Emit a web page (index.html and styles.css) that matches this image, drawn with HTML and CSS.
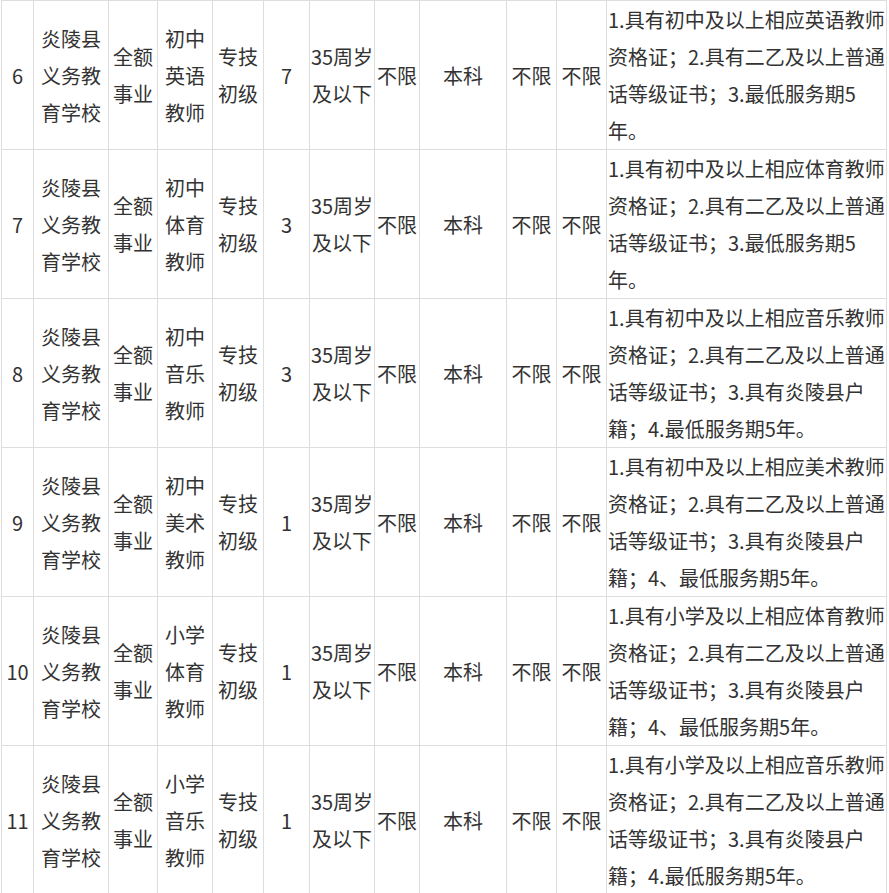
FILE: index.html
```html
<!DOCTYPE html>
<html lang="zh-CN">
<head>
<meta charset="utf-8">
<title>岗位表</title>
<link rel="stylesheet" href="styles.css">
</head>
<body>
<table class="jobs">
  <colgroup>
    <col class="c-no">
    <col class="c-unit">
    <col class="c-type">
    <col class="c-post">
    <col class="c-level">
    <col class="c-num">
    <col class="c-age">
    <col class="c-a">
    <col class="c-edu">
    <col class="c-b">
    <col class="c-c">
    <col class="c-req">
  </colgroup>
  <tbody>
    <tr>
      <td>6</td><td>炎陵县义务教育学校</td><td>全额事业</td><td>初中英语教师</td><td>专技初级</td><td>7</td><td>35周岁及以下</td><td>不限</td><td>本科</td><td>不限</td><td>不限</td>
      <td class="req">1.具有初中及以上相应英语教师资格证；2.具有二乙及以上普通话等级证书；3.最低服务期5年。</td>
    </tr>
    <tr>
      <td>7</td><td>炎陵县义务教育学校</td><td>全额事业</td><td>初中体育教师</td><td>专技初级</td><td>3</td><td>35周岁及以下</td><td>不限</td><td>本科</td><td>不限</td><td>不限</td>
      <td class="req">1.具有初中及以上相应体育教师资格证；2.具有二乙及以上普通话等级证书；3.最低服务期5年。</td>
    </tr>
    <tr>
      <td>8</td><td>炎陵县义务教育学校</td><td>全额事业</td><td>初中音乐教师</td><td>专技初级</td><td>3</td><td>35周岁及以下</td><td>不限</td><td>本科</td><td>不限</td><td>不限</td>
      <td class="req">1.具有初中及以上相应音乐教师资格证；2.具有二乙及以上普通话等级证书；3.具有炎陵县户籍；4.最低服务期5年。</td>
    </tr>
    <tr>
      <td>9</td><td>炎陵县义务教育学校</td><td>全额事业</td><td>初中美术教师</td><td>专技初级</td><td>1</td><td>35周岁及以下</td><td>不限</td><td>本科</td><td>不限</td><td>不限</td>
      <td class="req">1.具有初中及以上相应美术教师资格证；2.具有二乙及以上普通话等级证书；3.具有炎陵县户籍；4、最低服务期5年。</td>
    </tr>
    <tr>
      <td>10</td><td>炎陵县义务教育学校</td><td>全额事业</td><td>小学体育教师</td><td>专技初级</td><td>1</td><td>35周岁及以下</td><td>不限</td><td>本科</td><td>不限</td><td>不限</td>
      <td class="req">1.具有小学及以上相应体育教师资格证；2.具有二乙及以上普通话等级证书；3.具有炎陵县户籍；4、最低服务期5年。</td>
    </tr>
    <tr>
      <td>11</td><td>炎陵县义务教育学校</td><td>全额事业</td><td>小学音乐教师</td><td>专技初级</td><td>1</td><td>35周岁及以下</td><td>不限</td><td>本科</td><td>不限</td><td>不限</td>
      <td class="req">1.具有小学及以上相应音乐教师资格证；2.具有二乙及以上普通话等级证书；3.具有炎陵县户籍；4.最低服务期5年。</td>
    </tr>
  </tbody>
</table>
</body>
</html>
```

FILE: styles.css
```css
html, body {
  margin: 0;
  padding: 0;
  background: #ffffff;
}

body {
  font-family: "Noto Sans CJK SC", "Noto Sans", "Liberation Sans", sans-serif;
  font-size: 20px;
  line-height: 37px;
  color: #333333;
}

.jobs {
  margin: 0 0 0 1px;
  table-layout: fixed;
  border-collapse: separate;
  border-spacing: 0;
  border-top: 1px solid #dddddd;
  border-left: 1px solid #dddddd;
  width: 886px;
}

.jobs td {
  box-sizing: border-box;
  padding: 0;
  border-right: 1px solid #dddddd;
  border-bottom: 1px solid #dddddd;
  text-align: center;
  vertical-align: middle;
  word-break: break-all;
}

.jobs td.req {
  text-align: left;
  padding: 0 0 0 1px;
  word-break: normal;
  line-break: strict;
}

.c-no { width: 32px; }
.c-unit { width: 75px; }
.c-type { width: 49px; }
.c-post { width: 55px; }
.c-level { width: 51px; }
.c-num { width: 46px; }
.c-age { width: 65px; }
.c-a { width: 45px; }
.c-edu { width: 87px; }
.c-b { width: 50px; }
.c-c { width: 50px; }
.c-req { width: 280px; }
```
